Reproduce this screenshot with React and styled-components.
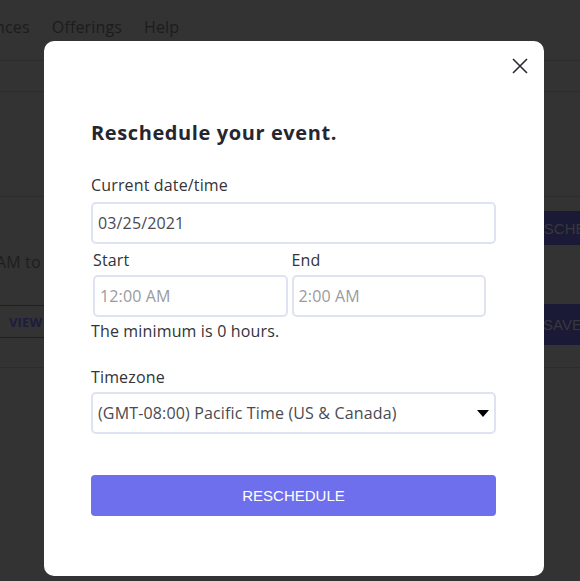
import styled, { createGlobalStyle } from 'styled-components'

const GlobalStyle = createGlobalStyle`
  html, body {
    margin: 0;
    padding: 0;
    background: #333333;
  }
  * { box-sizing: border-box; }
`

const font = `"Open Sans", "Noto Sans", sans-serif`

export default function App() {
  return (
    <Page>
      <GlobalStyle />
      <NavBar>
        <NavLink>Preferences</NavLink>
        <NavLink>Offerings</NavLink>
        <NavLink>Help</NavLink>
      </NavBar>
      <SubBar />
      <Spacer />
      <EventCard>
        <EventInfo>
          <EventTime>AM to 2:00 AM</EventTime>
          <OutlineButton>VIEW</OutlineButton>
        </EventInfo>
        <EventActions>
          <DarkButton $pad={10} $h={34}>RESCHEDULE</DarkButton>
          <DarkButton $pad={30} $h={41}>SAVE</DarkButton>
        </EventActions>
      </EventCard>

      <Backdrop>
        <Modal>
          <CloseButton aria-label="close">
            <svg width="16" height="16" viewBox="0 0 16 16">
              <path d="M1 1 L15 15 M15 1 L1 15" stroke="#2b2b33" strokeWidth="1.6" fill="none" />
            </svg>
          </CloseButton>
          <Title>Reschedule your event.</Title>
          <Label>Current date/time</Label>
          <Input>03/25/2021</Input>
          <TimeRow>
            <Field>
              <Label $tight>Start</Label>
              <Input $muted>12:00 AM</Input>
            </Field>
            <Field>
              <Label $tight>End</Label>
              <Input $muted>2:00 AM</Input>
            </Field>
          </TimeRow>
          <Hint>The minimum is 0 hours.</Hint>
          <Label $spaced>Timezone</Label>
          <Select>
            <span>(GMT-08:00) Pacific Time (US &amp; Canada)</span>
            <svg width="12" height="7" viewBox="0 0 12 7">
              <path d="M0 0 L12 0 L6 7 Z" fill="#000" />
            </svg>
          </Select>
          <SubmitButton>RESCHEDULE</SubmitButton>
        </Modal>
      </Backdrop>
    </Page>
  )
}

const Page = styled.div`
  width: 580px;
  height: 581px;
  overflow: hidden;
  position: relative;
  background: #333333;
  font-family: ${font};
  letter-spacing: 0.15px;
`
const NavBar = styled.div`
  height: 61px;
  display: flex;
  align-items: center;
  gap: 22px;
  padding: 0 0 7px 0;
  margin-left: -61px;
  border-bottom: 1px solid #2c2c2c;
`
const NavLink = styled.span`
  font-size: 16px;
  color: #1c1c1c;
`
const SubBar = styled.div`
  height: 31px;
  border-bottom: 1px solid #2c2c2c;
`
const Spacer = styled.div`
  height: 105px;
  border-bottom: 1px solid #2c2c2c;
`
const EventCard = styled.div`
  height: 171px;
  display: flex;
  justify-content: space-between;
  border-bottom: 1px solid #2c2c2c;
`
const EventInfo = styled.div`
  display: flex;
  flex-direction: column;
  align-items: flex-start;
  padding-top: 55px;
`
const EventTime = styled.span`
  font-size: 16px;
  line-height: 20px;
  color: #1e1e1e;
  margin-left: -4px;
`
const OutlineButton = styled.div`
  margin-top: 33px;
  width: 70px;
  height: 33px;
  margin-left: -10px;
  border: 1px solid #1c1b40;
  color: #1d1c3e;
  font-weight: 700;
  font-size: 13px;
  display: flex;
  align-items: center;
  padding-left: 18px;
`
const EventActions = styled.div`
  display: flex;
  flex-direction: column;
  gap: 59px;
  padding-top: 14px;
  margin-right: -53px;
`
const DarkButton = styled.div`
  width: 120px;
  height: ${p => p.$h}px;
  background: #1a1936;
  color: #38383c;
  font-size: 15px;
  letter-spacing: 0;
  display: flex;
  align-items: center;
  padding-left: ${p => p.$pad}px;
  font-family: "Liberation Sans", Arial, sans-serif;
`
const Backdrop = styled.div`
  position: absolute;
  inset: 0;
  display: flex;
  align-items: flex-start;
  padding: 41px 0 0 44px;
`
const Modal = styled.div`
  position: relative;
  width: 500px;
  height: 535px;
  background: #ffffff;
  border-radius: 10px;
  padding: 80px 48px 60px 47px;
  display: flex;
  flex-direction: column;
  color: #2a2a33;
`
const CloseButton = styled.button`
  position: absolute;
  top: 17px;
  right: 16px;
  width: 16px;
  height: 16px;
  padding: 0;
  border: 0;
  background: none;
  display: flex;
`
const Title = styled.h2`
  margin: 0;
  font-size: 20px;
  line-height: 24px;
  font-weight: 700;
  letter-spacing: 0.6px;
  color: #262630;
`
const Label = styled.div`
  margin-top: ${p => (p.$spaced ? '26px' : p.$tight ? '6px' : '30px')};
  font-size: 16px;
  line-height: 20px;
  color: #333338;
`
const Input = styled.div`
  margin-top: ${p => (p.$muted ? '5px' : '7px')};
  height: 42px;
  border: 2px solid #dfe3f1;
  border-radius: 5px;
  display: flex;
  align-items: center;
  padding-left: 5px;
  font-size: 16px;
  color: ${p => (p.$muted ? '#9a9aa0' : '#4a4a50')};
`
const TimeRow = styled.div`
  display: grid;
  grid-template-columns: 1fr 1fr;
  gap: 4px;
  padding: 0 10px 0 2px;
`
const Field = styled.div`
  display: flex;
  flex-direction: column;
`
const Hint = styled.div`
  margin-top: 4px;
  font-size: 16px;
  line-height: 20px;
  color: #333338;
`
const Select = styled.div`
  margin-top: 5px;
  height: 42px;
  border: 2px solid #dfe3f1;
  border-radius: 5px;
  display: flex;
  align-items: center;
  justify-content: space-between;
  padding: 0 5px;
  font-size: 16px;
  color: #4a4a50;
`
const SubmitButton = styled.button`
  margin-top: 41px;
  height: 41px;
  border: 0;
  border-radius: 4px;
  background: #6e6fec;
  color: #ffffff;
  font-family: "Liberation Sans", Arial, sans-serif;
  font-size: 15px;
  letter-spacing: 0;
`
